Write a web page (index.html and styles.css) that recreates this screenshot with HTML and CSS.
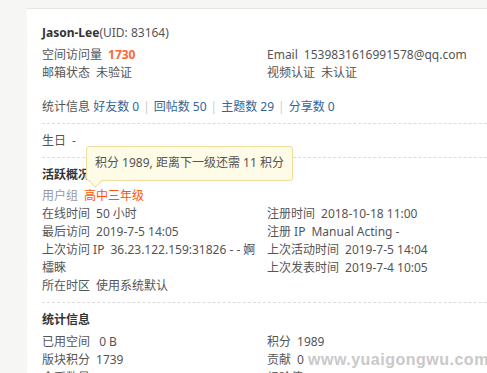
FILE: index.html
```html
<!DOCTYPE html>
<html lang="zh-CN">
<head>
    <meta charset="UTF-8">
    <title>Jason-Lee 的个人资料</title>
    <link rel="stylesheet" href="styles.css">
</head>
<body>

<div class="card">
    <div class="bm">
        <h2 class="name"><b>Jason-Lee</b>(UID: 83164)</h2>
        <ul class="pf cl">
            <li><em>空间访问量</em><strong class="hot">1730</strong></li>
            <li><em>Email</em>1539831616991578@qq.com</li>
            <li><em>邮箱状态</em>未验证</li>
            <li><em>视频认证</em>未认证</li>
        </ul>
        <p class="stat"><em>统计信息</em> <a href="#">好友数 0</a><span class="pipe">|</span><a href="#">回帖数 50</a><span class="pipe">|</span><a href="#">主题数 29</a><span class="pipe">|</span><a href="#">分享数 0</a></p>
    </div>

    <div class="bm">
        <p class="row"><em>生日</em>-</p>
    </div>

    <div class="bm">
        <h3>活跃概况</h3>
        <p class="row"><em class="xg">用户组</em><span class="grp">高中三年级</span></p>
        <ul class="pf cl">
            <li><em>在线时间</em>50 小时</li>
            <li><em>注册时间</em>2018-10-18 11:00</li>
            <li><em>最后访问</em>2019-7-5 14:05</li>
            <li><em>注册 IP</em>Manual Acting -</li>
            <li><em>上次访问 IP</em>36.23.122.159:31826 - - 婀櫺睞</li>
            <li><em>上次活动时间</em>2019-7-5 14:04</li>
            <li><em>上次发表时间</em>2019-7-4 10:05</li>
            <li><em>所在时区</em>使用系统默认</li>
        </ul>
    </div>

    <div class="bm last">
        <h3>统计信息</h3>
        <ul class="pf cl">
            <li><em>已用空间</em> 0 B</li>
            <li><em>积分</em>1989</li>
            <li><em>版块积分</em>1739</li>
            <li><em>贡献</em>0</li>
            <li><em>金币数量</em>30</li>
            <li><em>经验值</em>730</li>
        </ul>
    </div>

    <div class="tip">积分 1989, 距离下一级还需 11 积分</div>
    <div class="mark">www.yuaigongwu.com</div>
</div>

</body>
</html>
```

FILE: styles.css
```css
body {
    margin: 0;
    padding: 8px 0 0 27px;
    background: #f6f6f4;
    font-family: "Noto Sans", "Noto Sans CJK SC", sans-serif;
    font-size: 12px;
    color: #555;
    overflow: hidden;
}
.card {
    position: relative;
    width: 520px;
    min-height: 400px;
    background: #fff;
    border-top: 1px solid #e6e6e6;
    padding: 0 15px;
}
.bm {
    border-bottom: 1px dashed #dcdcdc;
    padding: 7px 0 7px;
    line-height: 18px;
}
.bm:first-child {
    padding-top: 15px;
}
.bm.last {
    border-bottom: none;
    padding-top: 7px;
}
em {
    font-style: normal;
    margin-right: 6px;
}
.name {
    margin: 0;
    font-size: 12px;
    font-weight: normal;
    line-height: 18px;
    color: #555;
}
.name b {
    color: #333;
}
h3 {
    margin: 1px 0 3px;
    font-size: 12px;
    line-height: 18px;
    color: #333;
}
.pf {
    list-style: none;
    margin: 4px 0 0;
    padding: 0;
}
.pf li {
    float: left;
    width: 225px;
    padding-right: 4px;
    box-sizing: border-box;
}
.cl::after {
    content: "";
    display: block;
    clear: both;
}
.hot {
    color: #ff6633;
}
.stat {
    margin: 16px 0 0;
}
.stat em {
    margin-right: 0;
}
.stat a {
    color: #336699;
    text-decoration: none;
}
.pipe {
    color: #ccc;
    margin: 0 4px;
}
.row {
    margin: 1px 0 0;
}
.xg {
    color: #999;
}
.grp {
    color: #ff5500;
}
.bm:nth-child(3) .pf {
    margin-top: 0;
}

/* tooltip over the level */
.tip {
    position: absolute;
    left: 59px;
    top: 137px;
    padding: 7px 8px 8px;
    line-height: 18px;
    background: #fefbe6;
    border: 1px solid #f1dca0;
    border-radius: 3px;
    color: #555;
    white-space: nowrap;
}
.tip::after {
    content: "";
    position: absolute;
    left: 4px;
    bottom: -6px;
    width: 8px;
    height: 8px;
    background: #fefbe6;
    border-right: 1px solid #f1dca0;
    border-bottom: 1px solid #f1dca0;
    transform: rotate(45deg);
}
.mark {
    position: absolute;
    left: 281px;
    top: 342px;
    font-family: "Liberation Sans", sans-serif;
    font-weight: bold;
    font-size: 16px;
    letter-spacing: 0.5px;
    color: #c9c9c9;
    text-shadow: 0 0 1px #fff;
}
```
